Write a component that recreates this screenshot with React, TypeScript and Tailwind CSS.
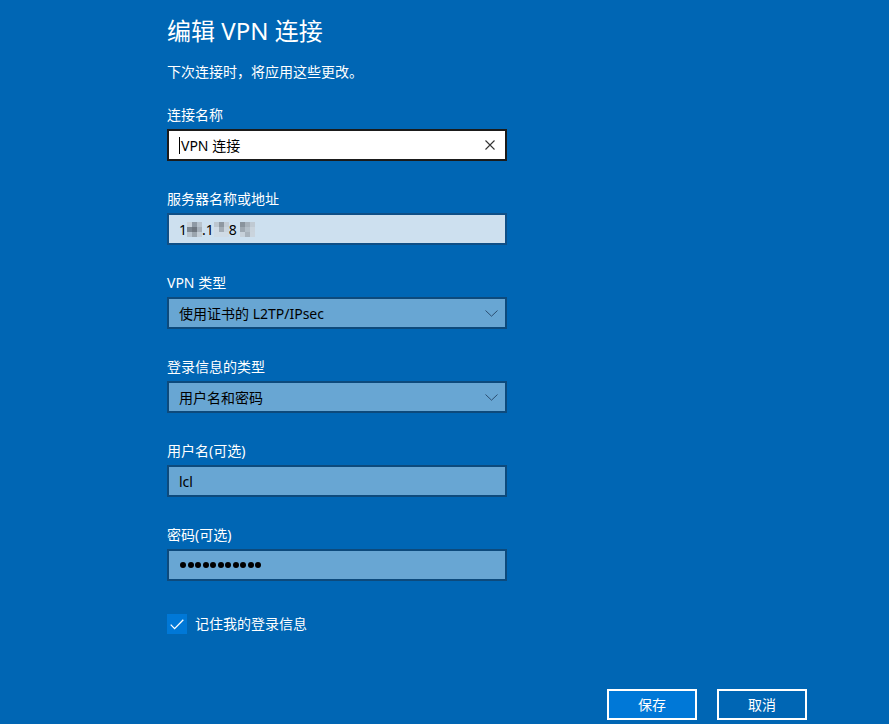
import type { ReactNode } from "react";

const FONT = "font-['Noto_Sans','Noto_Sans_CJK_SC',sans-serif]";

function Field({ label, children }: { label: string; children: ReactNode }) {
  return (
    <div className="flex flex-col gap-1">
      <label className="text-[14px] leading-5 text-white">{label}</label>
      {children}
    </div>
  );
}

function Chevron() {
  return (
    <svg width="13" height="7" viewBox="0 0 13 7" fill="none" className="mr-[7px]">
      <path d="M0.5 0.5L6.5 6.2L12.5 0.5" stroke="#2c4e70" strokeWidth="1" />
    </svg>
  );
}

function Select({ value }: { value: string }) {
  return (
    <div className="flex h-8 w-[340px] items-center justify-between border-2 border-[#0d4a7c] bg-[#68a6d3] pl-[10px] text-[14px] text-black">
      <span>{value}</span>
      <Chevron />
    </div>
  );
}

function Mosaic({ cells }: { cells: string[] }) {
  return (
    <span className="inline-grid grid-cols-3 align-middle">
      {cells.map((c, i) => (
        <span key={i} className="h-[5px] w-[5px]" style={{ backgroundColor: c }} />
      ))}
    </span>
  );
}

export default function App() {
  return (
    <div className={`min-h-screen w-full overflow-hidden bg-[#0066b4] text-white ${FONT}`}>
      <div className="pl-[167px] pt-[15px]">
        <h1 className="text-[24px] leading-8 font-normal">编辑 VPN 连接</h1>
        <p className="mt-[15px] text-[14px] leading-5">下次连接时，将应用这些更改。</p>

        <div className="mt-[23px] flex w-[340px] flex-col gap-7">
          <Field label="连接名称">
            <div className="flex h-8 items-center justify-between border-2 border-[#1b1b1b] bg-white pl-[10px] text-[14px] text-black">
              <span className="flex items-center">
                <span className="mr-px h-[17px] w-px bg-black" />
                VPN 连接
              </span>
              <svg width="10" height="10" viewBox="0 0 10 10" className="mr-[10px]">
                <path d="M0.5 0.5L9.5 9.5M9.5 0.5L0.5 9.5" stroke="#333" strokeWidth="1.1" />
              </svg>
            </div>
          </Field>

          <Field label="服务器名称或地址">
            <div className="flex h-8 items-center border-2 border-[#0f4f86] bg-[#cde0ef] pl-[10px] text-[14px] text-black">
              <span>1</span>
              <Mosaic cells={["#c9d2da", "#8f9aa5", "#b7c2cc", "#7d8791", "#6f7780", "#a6b0ba", "#b9c4ce", "#9ba5ae", "#c4ced7"]} />
              <span>.1</span>
              <Mosaic cells={["#bcc6cf", "#8e98a1", "#c3cdd6", "#d0dbe5", "#a3adb6", "#cad5de", "#cfdbe5", "#cfdbe5", "#cfdbe5"]} />
              <span>8</span>
              <span className="ml-[3px]" />
              <Mosaic cells={["#8a949d", "#a8b2bb", "#c0cad3", "#9ea8b1", "#b4bfc8", "#c9d3dc", "#c7d1da", "#a9b3bc", "#cad4dd"]} />
            </div>
          </Field>

          <Field label="VPN 类型">
            <Select value="使用证书的 L2TP/IPsec" />
          </Field>

          <Field label="登录信息的类型">
            <Select value="用户名和密码" />
          </Field>

          <Field label="用户名(可选)">
            <div className="flex h-8 items-center border-2 border-[#0d4a7c] bg-[#68a6d3] pl-[10px] text-[14px] text-black">
              lcl
            </div>
          </Field>

          <Field label="密码(可选)">
            <div className="flex h-8 items-center gap-[1.5px] border-2 border-[#0d4a7c] bg-[#68a6d3] pl-[11px]">
              {Array.from({ length: 11 }).map((_, i) => (
                <span key={i} className="h-[6px] w-[6px] rounded-full bg-black" />
              ))}
            </div>
          </Field>
        </div>

        <div className="mt-[33px] flex items-center gap-2">
          <span className="flex h-5 w-5 items-center justify-center bg-[#0078d7]">
            <svg width="14" height="11" viewBox="0 0 14 11" fill="none">
              <path d="M0.7 5.6L4.6 9.6L13.3 0.8" stroke="white" strokeWidth="1.3" />
            </svg>
          </span>
          <span className="text-[14px] leading-5">记住我的登录信息</span>
        </div>
      </div>

      <div className="mt-[55px] flex justify-end gap-5 pr-[82px]">
        <button type="button" className="h-[31px] w-[90px] border-2 border-white bg-[#0078d7] text-[14px] text-white">
          保存
        </button>
        <button type="button" className="h-[31px] w-[90px] border-2 border-white bg-transparent text-[14px] text-white">
          取消
        </button>
      </div>
    </div>
  );
}
